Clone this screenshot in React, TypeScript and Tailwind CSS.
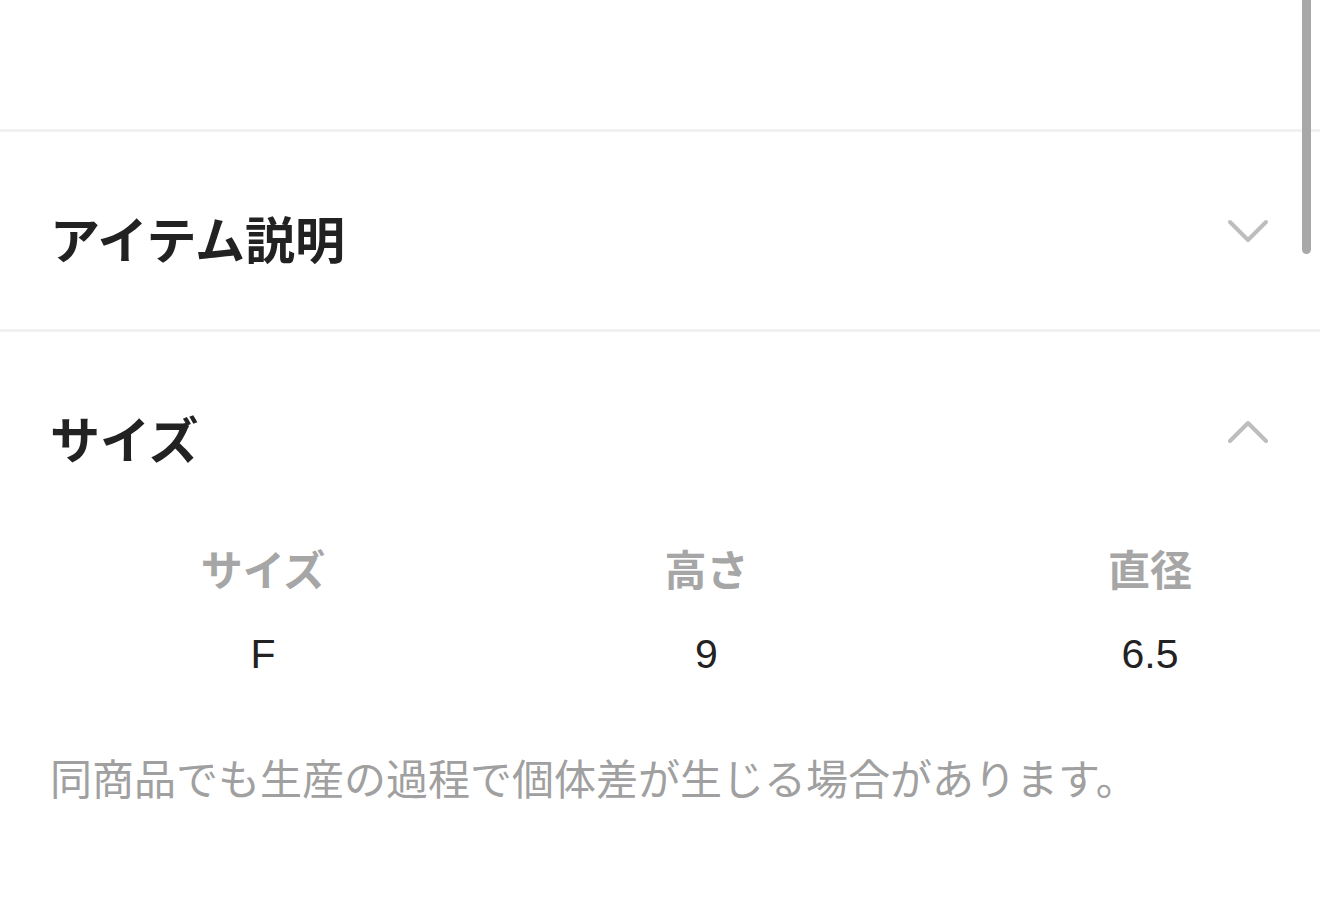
const font = { fontFamily: '"Liberation Sans", "Noto Sans CJK JP", sans-serif' };

function Chevron({ up }: { up?: boolean }) {
  return (
    <svg width="42" height="24" viewBox="0 0 42 24" fill="none" stroke="#bdbdbd" strokeWidth={4} strokeLinecap="round" strokeLinejoin="round">
      {up ? <path d="M3 22L21 4l18 18" /> : <path d="M3 3l18 18L39 3" />}
    </svg>
  );
}

const rows = [
  { label: "サイズ", value: "F" },
  { label: "高さ", value: "9" },
  { label: "直径", value: "6.5" },
];

export default function App() {
  return (
    <div className="relative h-[908px] w-full overflow-hidden bg-white text-[#222]" style={font}>
      <div className="h-[129px]" />

      <section className="border-t-[3px] border-[#f1f1f1]">
        <button className="flex h-[197px] w-full items-center justify-between pl-[50px] pr-[51px]">
          <h2 className="pt-[22px] text-[50px] font-bold leading-none">アイテム説明</h2>
          <Chevron />
        </button>
      </section>

      <section className="border-t-[3px] border-[#f1f1f1]">
        <button className="flex h-[197px] w-full items-center justify-between pl-[50px] pr-[51px]">
          <h2 className="pt-[22px] text-[50px] font-bold leading-none">サイズ</h2>
          <Chevron up />
        </button>

        <div className="flex justify-between pl-[163px] pr-[70px] pt-[22px]">
          {rows.map((r) => (
            <div key={r.label} className="flex w-[200px] flex-col items-center">
              <div className="text-[42px] font-bold leading-none text-[#a6a6a6]">{r.label}</div>
              <div className="mt-[41px] text-[41px] leading-none">{r.value}</div>
            </div>
          ))}
        </div>

        <p className="mt-[85px] pl-[50px] text-[42px] leading-none text-[#a0a0a0]">
          同商品でも生産の過程で個体差が生じる場合があります。
        </p>
      </section>

      <div className="absolute right-[9px] top-0 h-[254px] w-[9px] rounded-b-full bg-[#a8a8a8]" />
    </div>
  );
}
